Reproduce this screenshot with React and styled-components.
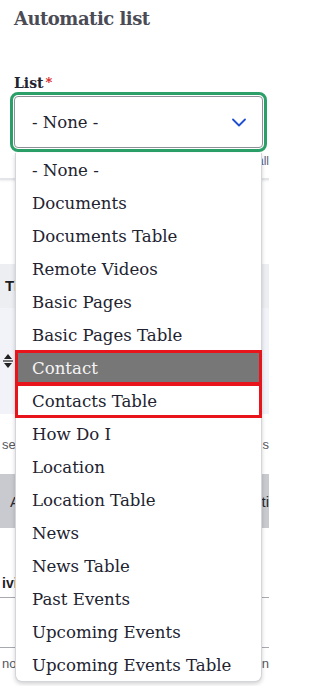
import React, { useState } from 'react';
import styled, { createGlobalStyle } from 'styled-components';

const GlobalStyle = createGlobalStyle`
  html, body {
    margin: 0;
    padding: 0;
    background: #fff;
  }
  body {
    font-family: "DejaVu Serif", "Liberation Serif", serif;
    overflow: hidden;
  }
`;

const Page = styled.div`
  position: relative;
  width: 269px;
  height: 686px;
  overflow: hidden;
`;

const Form = styled.div`
  padding: 8px 6px 0 14px;
`;

const Title = styled.h2`
  margin: 0;
  font-family: "DejaVu Serif", serif;
  font-size: 18px;
  font-weight: 700;
  color: #4a4b55;
  letter-spacing: -0.5px;
  line-height: 22px;
`;

const Label = styled.label`
  display: block;
  margin-top: 44px;
  font-size: 14px;
  font-weight: 700;
  color: #222330;
  line-height: 18px;
`;

const Required = styled.span`
  color: #d72222;
  margin-left: 2px;
  font-size: 13px;
  vertical-align: top;
`;

const FieldWrap = styled.div`
  position: relative;
  margin-top: 4px;
`;

const Select = styled.div`
  display: flex;
  align-items: center;
  justify-content: space-between;
  height: 52px;
  box-sizing: border-box;
  padding: 0 16px 0 17px;
  border: 1px solid #8e9099;
  border-radius: 4px;
  outline: 3px solid #2b9f68;
  outline-offset: 1px;
  font-size: 16.5px;
  color: #222330;
  background: #fff;
`;

const Menu = styled.ul`
  position: absolute;
  top: 57px;
  left: 1px;
  width: 247px;
  margin: 0;
  padding: 0;
  list-style: none;
  background: #fff;
  border: 1px solid #d4d5da;
  border-top: none;
  border-radius: 0 0 7px 7px;
  box-shadow: 0 2px 4px rgba(0, 0, 0, 0.18);
  z-index: 2;
  box-sizing: border-box;
`;

const Option = styled.li`
  height: 33px;
  display: flex;
  align-items: center;
  padding: 1px 0 0 16px;
  font-size: 16.6px;
  color: ${(p) => (p.$active ? '#f4f4f4' : '#222330')};
  background: ${(p) => (p.$active ? '#777777' : 'transparent')};
  box-sizing: border-box;
  outline: ${(p) => (p.$marked ? '3px solid #e8141c' : 'none')};
  outline-offset: -2px;
  position: relative;
  white-space: nowrap;
`;

/* page content sitting underneath the open menu */
const Under = styled.div`
  font-family: "Liberation Sans", Arial, sans-serif;
`;

const Help = styled.div`
  margin: 6px 0 0;
  padding: 0 0 0 14px;
  font-size: 12px;
  line-height: 14px;
  color: #5a6080;
  text-align: right;
  white-space: nowrap;
  overflow: hidden;
`;

const Divider = styled.div`
  margin-top: 10px;
  height: 2px;
  background: #e4e5e8;
  box-shadow: 0 1px 2px rgba(0, 0, 0, 0.08);
`;

const Band = styled.div`
  height: ${(p) => p.$h}px;
  margin-top: ${(p) => p.$mt || 0}px;
  background: ${(p) => p.$bg || 'transparent'};
  border-bottom: ${(p) => (p.$line ? '1px solid #a8a9ae' : 'none')};
  display: flex;
  align-items: ${(p) => p.$align || 'center'};
  justify-content: space-between;
  padding: 0 0 ${(p) => p.$pb || 0}px 2px;
  box-sizing: border-box;
  font-size: ${(p) => p.$fs || 12}px;
  font-weight: ${(p) => (p.$bold ? 700 : 400)};
  color: ${(p) => p.$color || '#55585f'};
  white-space: nowrap;
  overflow: hidden;
`;

const Side = styled.span`
  display: block;
`;

const SortIcon = styled.svg`
  width: 10px;
  height: 16px;
  margin-left: 1px;
`;

const Chevron = () => (
  <svg width="14" height="9" viewBox="0 0 14 9" fill="none">
    <path d="M1 1.5 L7 7.5 L13 1.5" stroke="#2050d0" strokeWidth="1.8" strokeLinecap="round" strokeLinejoin="round" />
  </svg>
);

const options = [
  '- None -',
  'Documents',
  'Documents Table',
  'Remote Videos',
  'Basic Pages',
  'Basic Pages Table',
  'Contact',
  'Contacts Table',
  'How Do I',
  'Location',
  'Location Table',
  'News',
  'News Table',
  'Past Events',
  'Upcoming Events',
  'Upcoming Events Table',
];

export default function App() {
  const [active] = useState('Contact');

  return (
    <Page>
      <GlobalStyle />
      <Form>
        <Title>Automatic list</Title>
        <Label>
          List<Required>*</Required>
        </Label>
        <FieldWrap>
          <Select>
            <span>- None -</span>
            <Chevron />
          </Select>
          <Menu>
            {options.map((o) => (
              <Option key={o} $active={o === active} $marked={o === 'Contact' || o === 'Contacts Table'}>
                {o}
              </Option>
            ))}
          </Menu>
        </FieldWrap>
      </Form>
      <Under>
        <Help>Choose a list to display all</Help>
        <Divider />
        <Band $mt={84} $h={44} $bg="#eceef2" $fs={15} $bold $color="#1c1d22" $pb={2}>
          <Side style={{ marginLeft: 3 }}>Title</Side>
          <Side />
        </Band>
        <Band $h={106} $bg="#f1f3f8">
          <SortIcon viewBox="0 0 10 16">
            <path d="M5 1 L9 6 H1 Z" fill="#222" />
            <rect x="0" y="7.4" width="10" height="1.2" fill="#222" />
            <path d="M1 10 H9 L5 15 Z" fill="#222" />
          </SortIcon>
          <Side />
        </Band>
        <Band $h={60} $fs={13}>
          <Side>se</Side>
          <Side>s</Side>
        </Band>
        <Band $h={54} $bg="#c9cacf" $fs={15} $color="#2a2b33">
          <Side style={{ marginLeft: 8 }}>A</Side>
          <Side>ti</Side>
        </Band>
        <Band $h={70} $line $align="flex-end" $pb={6} $fs={14} $bold $color="#1f2026">
          <Side>ivi</Side>
          <Side />
        </Band>
        <Band $h={50} $line />
        <Band $h={30} $fs={13}>
          <Side>noo</Side>
          <Side>n</Side>
        </Band>
      </Under>
    </Page>
  );
}
